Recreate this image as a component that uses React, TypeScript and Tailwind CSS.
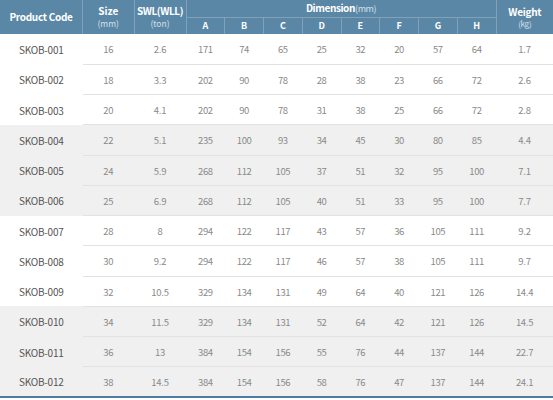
const rows: (string | number)[][] = [
  ["SKOB-001", 16, 2.6, 171, 74, 65, 25, 32, 20, 57, 64, 1.7],
  ["SKOB-002", 18, 3.3, 202, 90, 78, 28, 38, 23, 66, 72, 2.6],
  ["SKOB-003", 20, 4.1, 202, 90, 78, 31, 38, 25, 66, 72, 2.8],
  ["SKOB-004", 22, 5.1, 235, 100, 93, 34, 45, 30, 80, 85, 4.4],
  ["SKOB-005", 24, 5.9, 268, 112, 105, 37, 51, 32, 95, 100, 7.1],
  ["SKOB-006", 25, 6.9, 268, 112, 105, 40, 51, 33, 95, 100, 7.7],
  ["SKOB-007", 28, 8, 294, 122, 117, 43, 57, 36, 105, 111, 9.2],
  ["SKOB-008", 30, 9.2, 294, 122, 117, 46, 57, 38, 105, 111, 9.7],
  ["SKOB-009", 32, 10.5, 329, 134, 131, 49, 64, 40, 121, 126, 14.4],
  ["SKOB-010", 34, 11.5, 329, 134, 131, 52, 64, 42, 121, 126, 14.5],
  ["SKOB-011", 36, 13, 384, 154, 156, 55, 76, 44, 137, 144, 22.7],
  ["SKOB-012", 38, 14.5, 384, 154, 156, 58, 76, 47, 137, 144, 24.1],
];

const dims = ["A", "B", "C", "D", "E", "F", "G", "H"];

export default function App() {
  return (
    <div
      className="w-[553px] h-[400px] bg-white overflow-hidden"
      style={{ fontFamily: '"Noto Sans CJK KR", "Noto Sans", sans-serif' }}
    >
      <table className="w-[553px] table-fixed border-collapse text-center">
        <colgroup>
          <col className="w-[82.5px]" />
          <col className="w-[51.5px]" />
          <col className="w-[52px]" />
          {dims.map((d) => (
            <col key={d} className="w-[38.75px]" />
          ))}
          <col />
        </colgroup>
        <thead className="bg-[#5b87a6] text-white">
          <tr className="h-[17px]">
            <th rowSpan={2} className="text-[10px] leading-[12px] font-bold tracking-[-0.3px]">
              Product Code
            </th>
            <th rowSpan={2} className="border-l border-[#7fa1ba] text-[10px] font-bold">
              <div className="leading-[12px]">Size</div>
              <div className="mt-[1px] leading-[11px] font-normal text-[#d4e0ea] text-[8.5px]">(mm)</div>
            </th>
            <th rowSpan={2} className="border-l border-[#7fa1ba] text-[10px] font-bold tracking-[-0.4px]">
              <div className="leading-[12px]">SWL(WLL)</div>
              <div className="mt-[1px] leading-[11px] font-normal text-[#d4e0ea] text-[8.5px] tracking-normal">(ton)</div>
            </th>
            <th colSpan={8} className="border-l border-b border-[#7fa1ba] text-[10px] leading-[12px] font-bold tracking-[-0.4px]">
              Dimension<span className="font-normal text-[#d4e0ea] text-[9px]">(mm)</span>
            </th>
            <th rowSpan={2} className="border-l border-[#7fa1ba] text-[10px] font-bold tracking-[-0.3px]">
              <div className="leading-[12px]">Weight</div>
              <div className="leading-[11px] font-normal text-[#d4e0ea] text-[8px]">(kg)</div>
            </th>
          </tr>
          <tr className="h-[17px]">
            {dims.map((d) => (
              <th key={d} className="border-l border-[#7fa1ba] text-[9px] leading-[12px] font-bold">
                {d}
              </th>
            ))}
          </tr>
        </thead>
        <tbody>
          {rows.map((r, i) => {
            const gray = Math.floor(i / 3) % 2 === 1;
            const last = i === rows.length - 1;
            return (
              <tr
                key={r[0] as string}
                className={`h-[30.25px] ${gray ? "bg-[#f0f0f0]" : "bg-white"} ${last ? "border-b-2 border-[#4f7ca0]" : ""}`}
              >
                {r.map((v, j) => (
                  <td
                    key={j}
                    className={
                      j === 0
                        ? "pt-[1px] text-[10px] text-[#555] tracking-[-0.2px]"
                        : `pt-[1px] text-[9.5px] text-[#8a8a8a] tracking-[-0.3px] ${i > 0 ? "border-t border-[#e2e2e2]" : ""}`
                    }
                  >
                    {v}
                  </td>
                ))}
              </tr>
            );
          })}
        </tbody>
      </table>
    </div>
  );
}
